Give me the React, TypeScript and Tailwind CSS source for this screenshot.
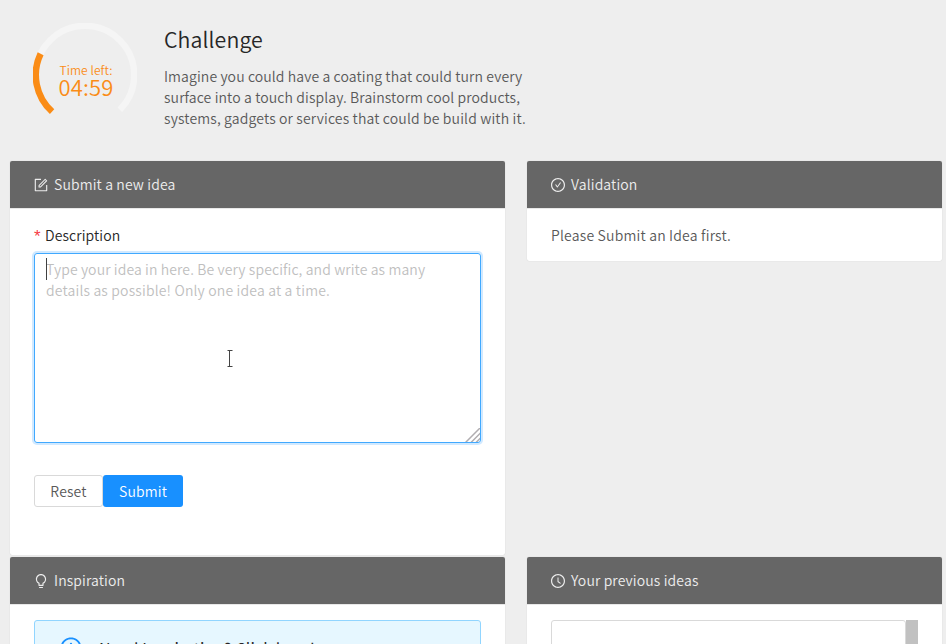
import type { ReactNode } from "react";
import {
  AiOutlineBulb,
  AiOutlineCheckCircle,
  AiOutlineClockCircle,
  AiOutlineForm,
  AiOutlineInfoCircle,
} from "react-icons/ai";

function Card({ icon, title, className = "", children }: { icon: ReactNode; title: string; className?: string; children: ReactNode }) {
  return (
    <section className={`rounded-[2px] bg-white shadow-[0_0_1px_rgba(0,0,0,0.2)] ${className}`}>
      <header className="flex h-12 items-center gap-[5px] rounded-t-[2px] border-b border-[#e8e8e8] bg-[#666666] pr-6 pl-[23px] text-[#ededed]">
        <span className="text-[16px]">{icon}</span>
        <h2 className="tracking-[0.13px]">{title}</h2>
      </header>
      <div className="px-6">{children}</div>
    </section>
  );
}

function Timer() {
  return (
    <div className="h-[105px] w-[104px] text-[#fa8c16]">
      <svg viewBox="0 0 104 104" className="h-[104px] w-[104px]" fill="none" strokeWidth="6.5">
        <circle cx="52" cy="52" r="49.2" stroke="#f5f5f5" pathLength="360" strokeDasharray="270 90" transform="rotate(135 52 52)" />
        <circle cx="52" cy="52" r="49.2" stroke="#fa8c16" pathLength="360" strokeDasharray="73.5 286.5" transform="rotate(132 52 52)" />
      </svg>
      <div className="relative -top-[66px] left-[1px] text-center">
        <div className="text-[12px] leading-[18px] tracking-[0.08px]">Time left:</div>
        <div className="-mt-[3px] text-[22px] leading-[20px]">04:59</div>
      </div>
    </div>
  );
}

export default function App() {
  return (
    <main className="h-[644px] w-[946px] overflow-hidden bg-[#eeeeee] font-['Noto_Sans_CJK_SC',sans-serif] text-[14px] font-[350] leading-[21px] tracking-[0.105px] text-[#595959]">
      <div className="flex h-[161px] gap-[27px] pt-[23px] pl-[33px]">
        <Timer />
        <div className="pt-[2px]">
          <h1 className="text-[21.3px] leading-[28px] text-[#262626]">Challenge</h1>
          <p className="mt-[13px] w-[380px]">
            Imagine you could have a coating that could turn every
            <br />
            <span className="tracking-[0.115px]">surface into a touch display. Brainstorm cool products,</span>
            <br />
            <span className="tracking-[0.15px]">systems, gadgets or services that could be build with it.</span>
          </p>
        </div>
      </div>
      <div className="grid grid-cols-[495px_415px] items-start gap-x-[22px] gap-y-[2px] pl-[10px]">
        <Card icon={<AiOutlineForm />} title="Submit a new idea" className="h-[394px]">
          <div className="flex pt-[16px] text-[#262626]">
            <span className="w-[11px] pt-[2px] font-['Liberation_Sans',sans-serif] text-[17px] leading-[19px] text-[#f5222d]/90">*</span>Description
          </div>
          <div className="relative mt-[7px] h-[190px] rounded-[3px] border border-[#40a9ff] px-[11px] pt-[5px] text-[#bfbfbf] shadow-[0_0_0_2px_rgba(24,144,255,0.2)]">
            Type your idea in here. Be very specific, and write as many
            <br />
            <span className="tracking-[0.165px]">details as possible! Only one idea at a time.</span>
            <span className="absolute top-[4px] left-[11px] h-[22px] w-px bg-[#404040]" />
            <svg className="absolute top-[96px] left-[192px]" width="6" height="18" fill="none" stroke="#444">
              <path d="M.5.5h5M2.5.5v16M.5 16.5h5" />
            </svg>
            <svg className="absolute right-0 bottom-0" width="15" height="14" fill="none" stroke="#b0adb0" strokeWidth="1.5">
              <path d="M.5 14.5 15.5-.5M6 14.5l10-10M11 14.5l5-5" />
            </svg>
          </div>
          <div className="mt-8 flex">
            <button className="h-8 w-[69px] rounded-[3px] border border-[#d9d9d9] bg-white tracking-[0.15px]">Reset</button>
            <button className="h-8 w-20 rounded-[3px] bg-[#1890ff] text-white tracking-[0.15px]">Submit</button>
          </div>
        </Card>
        <Card icon={<AiOutlineCheckCircle />} title="Validation" className="h-[100px]">
          <p className="pt-[16px] tracking-[0.19px]">Please Submit an Idea first.</p>
        </Card>
        <Card icon={<AiOutlineBulb />} title="Inspiration" className="h-[100px]">
          <div className="mt-[15px] flex h-16 gap-[16px] rounded-[3px] border border-[#91d5ff] bg-[#e6f7ff] pt-[15px] pl-6 text-[#262626]">
            <AiOutlineInfoCircle className="h-6 w-6 text-[#1890ff]" />
            <strong className="text-[16px] font-normal leading-[24px]">Need Inspiration? Click here!</strong>
          </div>
        </Card>
        <Card icon={<AiOutlineClockCircle />} title="Your previous ideas" className="h-[100px]">
          <div className="mt-[15px] flex w-[367px]">
            <div className="h-16 w-[355px] rounded-[3px] border border-[#d9d9d9]" />
            <div className="h-16 w-3 bg-[#c1c1c1]" />
          </div>
        </Card>
      </div>
    </main>
  );
}
